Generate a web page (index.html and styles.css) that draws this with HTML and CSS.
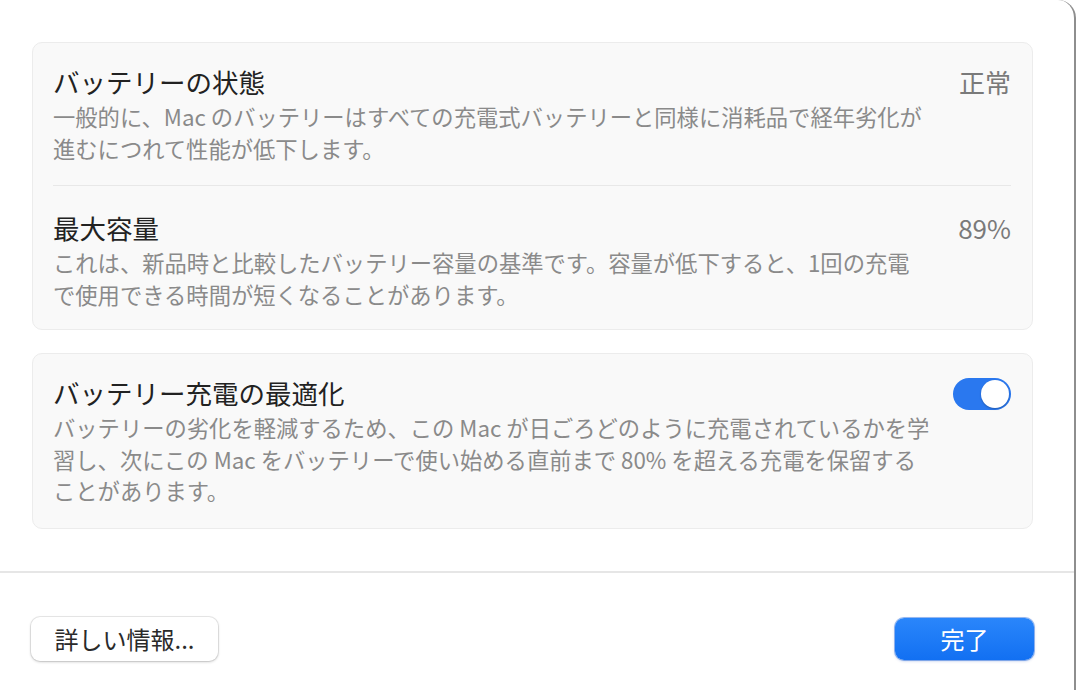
FILE: index.html
```html
<!DOCTYPE html>
<html lang="ja">
<head>
    <meta charset="UTF-8">
    <meta name="viewport" content="width=device-width, initial-scale=1.0">
    <title>バッテリーの状態</title>
    <link rel="stylesheet" href="styles.css">
</head>
<body>
    <div class="window">
        <div class="content">
            <div class="card">
                <div class="row">
                    <div class="row-text">
                        <div class="row-title">バッテリーの状態</div>
                        <div class="row-desc">一般的に、Mac のバッテリーはすべての充電式バッテリーと同様に消耗品で経年劣化が<br>進むにつれて性能が低下します。</div>
                    </div>
                    <div class="row-value">正常</div>
                </div>
                <div class="row">
                    <div class="row-text">
                        <div class="row-title">最大容量</div>
                        <div class="row-desc">これは、新品時と比較したバッテリー容量の基準です。容量が低下すると、1回の充電<br>で使用できる時間が短くなることがあります。</div>
                    </div>
                    <div class="row-value">89%</div>
                </div>
            </div>

            <div class="card">
                <div class="row">
                    <div class="row-text">
                        <div class="row-title">バッテリー充電の最適化</div>
                        <div class="row-desc">バッテリーの劣化を軽減するため、この Mac が日ごろどのように充電されているかを学<br>習し、次にこの Mac をバッテリーで使い始める直前まで 80% を超える充電を保留する<br>ことがあります。</div>
                    </div>
                    <div class="toggle on"><span class="knob"></span></div>
                </div>
            </div>
        </div>

        <div class="footer">
            <button class="btn">詳しい情報...</button>
            <button class="btn primary">完了</button>
        </div>
    </div>
</body>
</html>
```

FILE: styles.css
```css
body {
    margin: 0;
    padding: 0;
    background-color: #ffffff;
    font-family: "Noto Sans CJK JP", "Noto Sans", sans-serif;
    overflow: hidden;
}

.window {
    width: 1076px;
    height: 690px;
    background-color: #ffffff;
    border-right: 2px solid #8e8e8e;
    border-top-right-radius: 18px;
    box-sizing: border-box;
}

.content {
    padding: 42px 41px 0 32px;
    display: flex;
    flex-direction: column;
    gap: 23px;
    box-sizing: border-box;
    border-bottom: 2px solid #e6e6e6;
    height: 573px;
}

.card {
    background-color: #f9f9f9;
    border: 1px solid #ececec;
    border-radius: 10px;
    padding: 0 21px 0 20px;
}

.row {
    display: flex;
    justify-content: space-between;
    align-items: flex-start;
    padding: 22px 0 21px;
}

.row + .row {
    border-top: 1px solid #e8e8e8;
    padding-top: 25px;
    padding-bottom: 19px;
}

.row-title {
    font-size: 26.5px;
    line-height: 34px;
    color: #222222;
    margin-bottom: 2px;
}

.row-desc {
    font-size: 22.3px;
    line-height: 31.5px;
    color: #8a8a8a;
    white-space: nowrap;
}

.row-value {
    font-size: 26px;
    line-height: 34px;
    color: #7a7a7a;
}

.toggle {
    width: 58px;
    height: 32px;
    border-radius: 16px;
    background-color: #d9d9d9;
    box-sizing: border-box;
    padding: 2px;
    margin-top: 2px;
    display: flex;
}

.toggle.on {
    background-color: #2a78ef;
    justify-content: flex-end;
}

.knob {
    width: 28px;
    height: 28px;
    border-radius: 50%;
    background-color: #ffffff;
    box-shadow: 0 1px 2px rgba(0, 0, 0, 0.25);
}

.footer {
    display: flex;
    justify-content: space-between;
    align-items: center;
    padding: 44px 40px 0 31px;
}

.btn {
    font-family: inherit;
    font-size: 24px;
    line-height: 30px;
    width: 187px;
    height: 44px;
    padding: 0;
    color: #2a2a2a;
    background-color: #ffffff;
    border: none;
    border-radius: 9px;
    box-shadow: 0 0 0 1px rgba(0, 0, 0, 0.08), 0 1px 3px rgba(0, 0, 0, 0.2);
}

.btn.primary {
    width: 139px;
    height: 42px;
    color: #ffffff;
    background: linear-gradient(#2a86fb, #1270f2);
    box-shadow: 0 0 0 1px rgba(10, 90, 220, 0.4), 0 1px 3px rgba(0, 60, 180, 0.3);
}
```
